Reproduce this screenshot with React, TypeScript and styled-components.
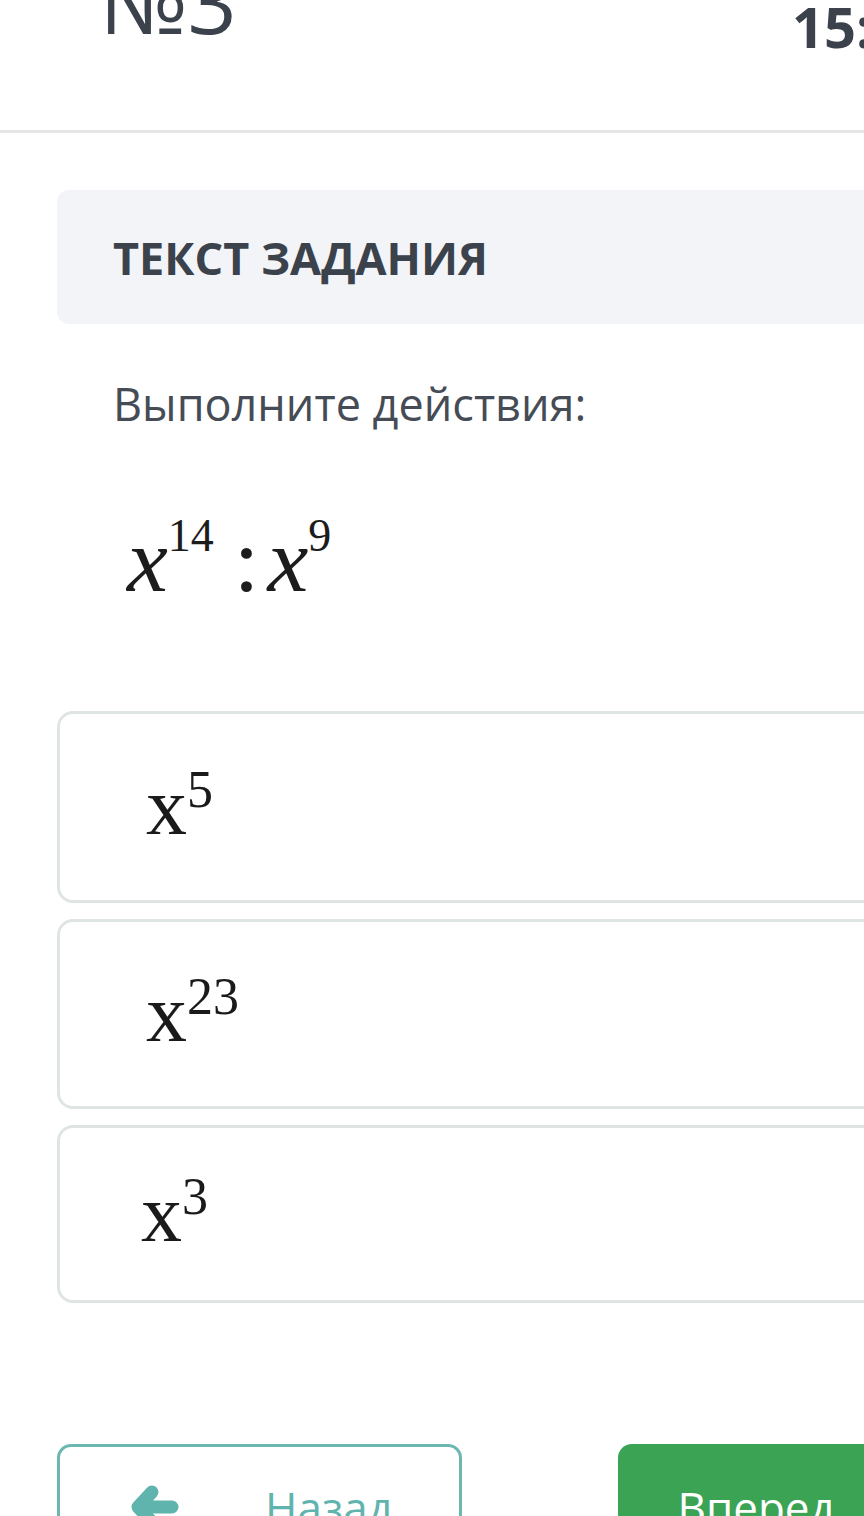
import React from "react";
import styled, { createGlobalStyle } from "styled-components";

const GlobalStyle = createGlobalStyle`
  html, body {
    margin: 0;
    padding: 0;
    background: #ffffff;
    overflow: hidden;
  }
  body {
    font-family: "Open Sans", "Liberation Sans", sans-serif;
    color: #3b424c;
  }
`;

const Page = styled.div`
  width: 864px;
  height: 1516px;
  overflow: hidden;
`;

const Header = styled.header`
  display: flex;
  align-items: flex-start;
  height: 130px;
  padding-left: 100px;
  border-bottom: 3px solid #e6e6e6;
`;

const Title = styled.h1`
  margin: -42px 0 0;
  font-size: 86px;
  font-weight: 400;
  line-height: 1;
  color: #3b424c;
`;

const Timer = styled.div`
  margin-left: auto;
  margin-right: -8px;
  margin-top: -2px;
  font-size: 56px;
  font-weight: 700;
  line-height: 1;
  color: #3b424c;
`;

const Content = styled.main`
  width: 960px;
  padding-left: 57px;
`;

const TaskBar = styled.div`
  display: flex;
  align-items: center;
  height: 134px;
  margin-top: 57px;
  padding-left: 56px;
  background: #f2f4f7;
  border-radius: 12px;
`;

const TaskLabel = styled.h2`
  margin: 0;
  font-size: 45px;
  font-weight: 700;
  color: #3b424c;
`;

const Question = styled.p`
  margin: 48px 0 0 56px;
  font-size: 45px;
  line-height: 1.4;
  color: #454c55;
`;

const Formula = styled.div`
  margin: 79px 0 0 70px;
  height: 110px;
  font-family: "Liberation Serif", "Times New Roman", serif;
  font-style: italic;
  font-size: 92px;
  line-height: 1;
  color: #1c1c1c;
`;

const Sup = styled.span<{ $size: number; $raise: number }>`
  font-style: normal;
  font-size: ${(p) => p.$size}px;
  line-height: 0;
  vertical-align: ${(p) => p.$raise}px;
`;

const Colon = styled.span`
  font-style: normal;
  margin: 0 8px 0 20px;
`;

const Answers = styled.div`
  display: flex;
  flex-direction: column;
  gap: 16px;
  margin-top: 87px;
`;

const AnswerCard = styled.div<{ $h: number; $pad: number }>`
  display: flex;
  align-items: center;
  height: ${(p) => p.$h}px;
  box-sizing: border-box;
  padding-left: ${(p) => p.$pad}px;
  border: 3px solid #dfe4e4;
  border-radius: 16px;
  background: #fff;
`;

const AnswerText = styled.div`
  font-family: "Liberation Serif", "Times New Roman", serif;
  font-size: 82px;
  line-height: 1;
  color: #1a1a1a;
`;

const Buttons = styled.div`
  display: flex;
  gap: 156px;
  margin-top: 141px;
`;

const BackButton = styled.button`
  display: flex;
  align-items: center;
  gap: 86px;
  width: 405px;
  height: 126px;
  padding: 0 0 0 70px;
  box-sizing: border-box;
  border: 3px solid #6bb8b3;
  border-radius: 14px;
  background: #fff;
  color: #5fb4ae;
  font-family: "Open Sans", "Liberation Sans", sans-serif;
  font-size: 44px;
`;

const NextButton = styled.button`
  display: flex;
  align-items: center;
  width: 400px;
  height: 126px;
  padding: 0 0 0 60px;
  box-sizing: border-box;
  border: none;
  border-radius: 14px;
  background: #3ba354;
  color: #fff;
  font-family: "Open Sans", "Liberation Sans", sans-serif;
  font-size: 44px;
`;

const BackArrow = () => (
  <svg width="49" height="44" viewBox="0 0 49 44" fill="none">
    <path
      d="M22 7 L8 22 L22 37 M9 22 H42"
      stroke="#5fb4ae"
      strokeWidth="13"
      strokeLinecap="round"
      strokeLinejoin="round"
    />
  </svg>
);

const answers = [
  { exp: "5", h: 192, pad: 86 },
  { exp: "23", h: 190, pad: 86 },
  { exp: "3", h: 178, pad: 81 },
];

export default function App() {
  return (
    <Page>
      <GlobalStyle />
      <Header>
        <Title>№3</Title>
        <Timer>15:</Timer>
      </Header>
      <Content>
        <TaskBar>
          <TaskLabel>ТЕКСТ ЗАДАНИЯ</TaskLabel>
        </TaskBar>
        <Question>Выполните действия:</Question>
        <Formula>
          x<Sup $size={46} $raise={40}>14</Sup>
          <Colon>:</Colon>x<Sup $size={46} $raise={40}>9</Sup>
        </Formula>
        <Answers>
          {answers.map((a) => (
            <AnswerCard key={a.exp} $h={a.h} $pad={a.pad}>
              <AnswerText>
                x<Sup $size={52} $raise={27}>{a.exp}</Sup>
              </AnswerText>
            </AnswerCard>
          ))}
        </Answers>
        <Buttons>
          <BackButton>
            <BackArrow />
            Назад
          </BackButton>
          <NextButton>Вперед</NextButton>
        </Buttons>
      </Content>
    </Page>
  );
}
